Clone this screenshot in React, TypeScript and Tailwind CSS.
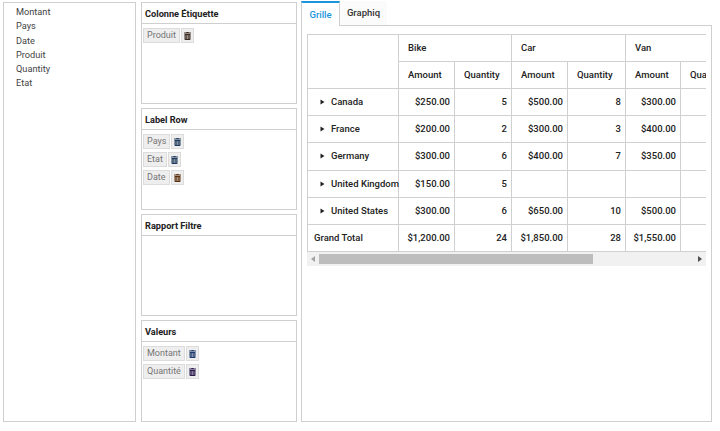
import React from 'react';
import { FaTrashAlt } from 'react-icons/fa';

const fields = ['Montant', 'Pays', 'Date', 'Produit', 'Quantity', 'Etat'];

const panels = [
  { title: 'Colonne Étiquette', items: [{ name: 'Produit', color: 'text-[#3a2a20]' }] },
  {
    title: 'Label Row',
    items: [
      { name: 'Pays', color: 'text-[#1f3a5c]' },
      { name: 'Etat', color: 'text-[#1f3a5c]' },
      { name: 'Date', color: 'text-[#5a3010]' },
    ],
  },
  { title: 'Rapport Filtre', items: [] },
  {
    title: 'Valeurs',
    items: [
      { name: 'Montant', color: 'text-[#1f3a6c]' },
      { name: 'Quantité', color: 'text-[#2a1a4c]' },
    ],
  },
];

const rows = [
  { name: 'Canada', cells: ['$250.00', '5', '$500.00', '8', '$300.00', ''] },
  { name: 'France', cells: ['$200.00', '2', '$300.00', '3', '$400.00', ''] },
  { name: 'Germany', cells: ['$300.00', '6', '$400.00', '7', '$350.00', ''] },
  { name: 'United Kingdom', cells: ['$150.00', '5', '', '', '', ''] },
  { name: 'United States', cells: ['$300.00', '6', '$650.00', '10', '$500.00', ''] },
];

const totals = ['$1,200.00', '24', '$1,850.00', '28', '$1,550.00', ''];
const cellBorder = 'border border-[#d0d0d0]';

function Chip({ name, color }: { name: string; color: string }) {
  return (
    <div className="flex h-[15px]">
      <span className="flex items-center border border-[#dcdcdc] bg-[#eeeeee] px-[3px] text-[9px] text-[#757575]">{name}</span>
      <span className={`ml-px flex w-[13px] items-center justify-center border border-[#dcdcdc] bg-[#eeeeee] ${color}`}>
        <FaTrashAlt className="h-[8px] w-[7px]" />
      </span>
    </div>
  );
}

function Panel({ title, items }: (typeof panels)[number]) {
  return (
    <div className="flex flex-1 flex-col border border-[#cfcfcf]">
      <div className="flex h-[21px] shrink-0 items-center border-b border-[#cfcfcf] pl-[3px] pt-[2px] text-[9.2px] font-bold text-[#222222]">
        {title}
      </div>
      <div className="flex flex-col gap-[3px] pl-[1px] pt-[4px]">
        {items.map((item) => (
          <Chip key={item.name} name={item.name} color={item.color} />
        ))}
      </div>
    </div>
  );
}

export default function App() {
  return (
    <div className="flex h-[431px] w-[720px] gap-[5px] overflow-hidden bg-white pb-[9px] pl-[3px] pr-[8px] pt-[2px] font-['Roboto',sans-serif] text-[#333333]">
      <div className="flex w-[133px] shrink-0 flex-col border border-[#cfcfcf] pl-[12px] pt-[2px]">
        {fields.map((field) => (
          <div key={field} className="flex h-[14.2px] items-center text-[9.2px] text-[#444444]">
            {field}
          </div>
        ))}
      </div>

      <div className="flex w-[156px] shrink-0 flex-col gap-[4px]">
        {panels.map((panel) => (
          <Panel key={panel.title} {...panel} />
        ))}
      </div>

      <div className="-mt-px ml-[-1px] flex min-w-0 flex-1 flex-col">
        <div className="flex h-[25px] shrink-0 items-stretch">
          <div className="flex w-[39px] items-center justify-center border-l border-r border-t-2 border-l-[#cfcfcf] border-r-[#cfcfcf] border-t-[#1b96dc] pt-[1px] text-[9.5px] font-medium text-[#1b96dc]">
            Grille
          </div>
          <div className="flex w-[47px] items-center justify-center border-b border-[#cfcfcf] bg-[#fbfbfb] pt-[1px] text-[9.5px] font-medium text-[#333333]">
            Graphiq
          </div>
          <div className="flex-1 border-b border-[#cfcfcf]" />
        </div>

        <div className="flex-1 border-x border-b border-[#cfcfcf] px-[5px] pt-[8px]">
          <div className="w-[399px] overflow-hidden">
            <table className="w-[400px] table-fixed border-collapse text-[9.5px] font-medium text-[#222222]">
              <colgroup>
                <col className="w-[91px]" />
                <col className="w-[56px]" />
                <col className="w-[57px]" />
                <col className="w-[56px]" />
                <col className="w-[58px]" />
                <col className="w-[55px]" />
                <col className="w-[27px]" />
              </colgroup>
              <thead>
                <tr className="h-[27px]">
                  <th rowSpan={2} className={cellBorder} />
                  {['Bike', 'Car', 'Van'].map((vehicle) => (
                    <th key={vehicle} colSpan={2} className={`${cellBorder} pl-[9px] text-left font-medium`}>
                      {vehicle}
                    </th>
                  ))}
                </tr>
                <tr className="h-[27px]">
                  {['Amount', 'Quantity', 'Amount', 'Quantity', 'Amount', 'Quantity'].map((label, i) => (
                    <th key={i} className={`${cellBorder} overflow-hidden whitespace-nowrap pl-[9px] text-left font-medium`}>
                      {label}
                    </th>
                  ))}
                </tr>
              </thead>
              <tbody>
                {rows.map((row) => (
                  <tr key={row.name} className="h-[27.2px]">
                    <td className={`${cellBorder} whitespace-nowrap pl-[12px]`}>
                      <span className="flex items-center gap-[6px]">
                        <svg width="5" height="6" viewBox="0 0 5 6" className="shrink-0 text-[#222222]">
                          <path d="M0.5 0.5 L4.5 3 L0.5 5.5 Z" fill="currentColor" />
                        </svg>
                        {row.name}
                      </span>
                    </td>
                    {row.cells.map((cell, i) => (
                      <td key={i} className={`${cellBorder} pr-[4px] text-right`}>
                        {cell}
                      </td>
                    ))}
                  </tr>
                ))}
                <tr className="h-[27.2px]">
                  <td className={`${cellBorder} pl-[6px]`}>Grand Total</td>
                  {totals.map((cell, i) => (
                    <td key={i} className={`${cellBorder} pr-[4px] text-right`}>
                      {cell}
                    </td>
                  ))}
                </tr>
              </tbody>
            </table>
          </div>
          <div className="flex h-[14px] w-[399px] items-center bg-[#f1f1f1]">
            <div className="flex w-[12px] shrink-0 items-center justify-center">
              <svg width="4" height="6" viewBox="0 0 4 6">
                <path d="M4 0 L0 3 L4 6 Z" fill="#a3a3a3" />
              </svg>
            </div>
            <div className="h-[10px] w-[274px] bg-[#bdbdbd]" />
            <div className="flex flex-1 items-center justify-end pr-[4px]">
              <svg width="4" height="6" viewBox="0 0 4 6">
                <path d="M0 0 L4 3 L0 6 Z" fill="#505050" />
              </svg>
            </div>
          </div>
        </div>
      </div>
    </div>
  );
}
